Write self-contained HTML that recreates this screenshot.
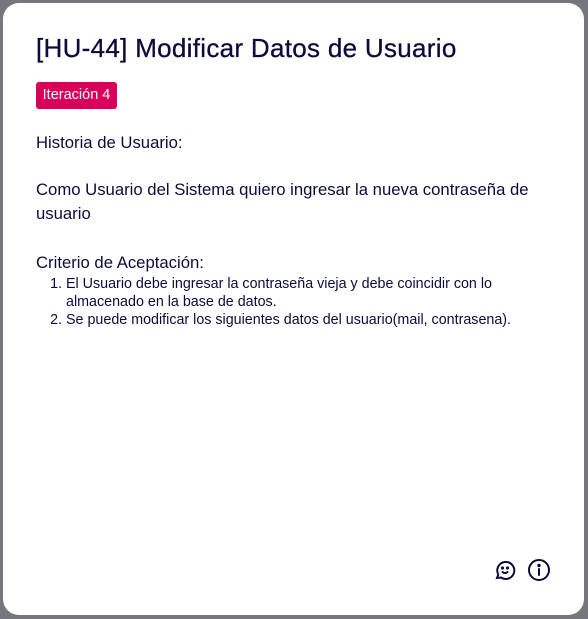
<!DOCTYPE html>
<html><head><style>
html,body{margin:0;padding:0;background:#76767f;width:588px;height:619px;overflow:hidden}
.card{position:absolute;left:3px;top:3px;width:581px;height:612px;background:#fff;border-radius:16px;font-family:"Liberation Sans",sans-serif;color:#0e0b3c}
h1{position:absolute;left:33px;top:30px;margin:0;font-family:"Liberation Sans",sans-serif;font-size:26px;font-weight:500;letter-spacing:0.3px;-webkit-text-stroke:0.3px #0e0b3c}
.badge{position:absolute;left:33px;top:79px;width:81px;height:27px;background:#d9005b;color:#fff;border-radius:3px;font-size:14.5px;line-height:27px;text-align:center}
.t{position:absolute;left:33px;font-size:16.7px;line-height:24px}
ol{position:absolute;left:33px;top:272px;margin:0;padding-left:30px;font-size:14.3px;line-height:18px;width:480px}
.ic{position:absolute;top:555px}
</style></head><body>
<div class="card">
<h1>[HU-44] Modificar Datos de Usuario</h1>
<div class="badge">Iteración 4</div>
<div class="t" style="top:128px">Historia de Usuario:</div>
<div class="t" style="top:175px;width:510px">Como Usuario del Sistema quiero ingresar la nueva contraseña de usuario</div>
<div class="t" style="top:248px">Criterio de Aceptación:</div>
<ol><li>El Usuario debe ingresar la contraseña vieja y debe coincidir con lo almacenado en la base de datos.</li><li>Se puede modificar los siguientes datos del usuario(mail, contrasena).</li></ol>
<svg class="ic" style="left:490px" width="24" height="24" viewBox="0 0 24 24" fill="none" stroke="#0e0b3c" stroke-width="2" stroke-linecap="round"><path d="M4 20l1.3-3.5A8.5 8.5 0 1 1 8 19.5z"/><circle cx="9.5" cy="10" r=".6" fill="#0e0b3c"/><circle cx="14.5" cy="10" r=".6" fill="#0e0b3c"/><path d="M9.5 14a3.5 3.5 0 0 0 5 0"/></svg>
<svg class="ic" style="left:524px" width="24" height="24" viewBox="0 0 24 24" fill="none" stroke="#0e0b3c" stroke-width="2" stroke-linecap="round"><circle cx="12" cy="12" r="10"/><path d="M12 11v6"/><circle cx="12" cy="7.5" r=".7" fill="#0e0b3c"/></svg>
</div>
</body></html>
